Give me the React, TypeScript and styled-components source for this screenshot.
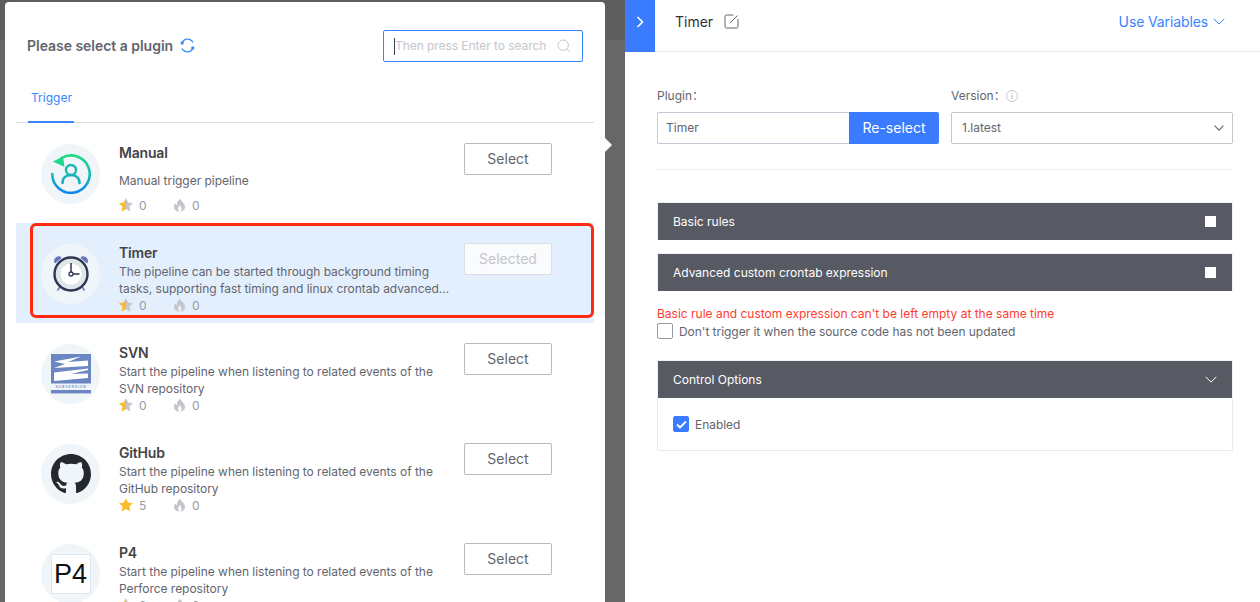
import React from "react";
import styled, { createGlobalStyle } from "styled-components";
import { BsGithub } from "react-icons/bs";

const GlobalStyle = createGlobalStyle`
  html, body { margin: 0; padding: 0; background: #666; }
  body { font-family: Inter, "Noto Sans CJK SC", "Noto Sans", sans-serif; font-size: 12px; color: #63656e; }
  * { box-sizing: border-box; }
`;

const Page = styled.div`
  display: flex;
  width: 1260px;
  height: 602px;
  overflow: hidden;
  background: #666;
`;

const LeftPane = styled.div`
  width: 625px;
  flex: none;
  padding: 2px 0 0 5px;
  position: relative;
  background: linear-gradient(#5e5e5e 0, #5e5e5e 40px, #676767 40px);
  &::before {
    content: "";
    position: absolute;
    left: -14px;
    top: 123px;
    width: 18px;
    height: 18px;
    border: 1px solid #56657c;
    border-radius: 50%;
  }
`;

const Modal = styled.div`
  position: relative;
  width: 600px;
  height: 640px;
  background: #fff;
  border-radius: 4px;
  padding: 0 11px;
  &::after {
    content: "";
    position: absolute;
    right: -7px;
    top: 136px;
    border-left: 7px solid #fff;
    border-top: 7px solid transparent;
    border-bottom: 7px solid transparent;
  }
`;

const ModalHeader = styled.div`
  height: 73px;
  display: flex;
  align-items: center;
  justify-content: space-between;
  padding: 14px 11px 0 11px;
`;

const TitleGroup = styled.div`
  display: flex;
  align-items: center;
  gap: 7px;
`;

const ModalTitle = styled.span`
  font-size: 14px;
  font-weight: 600;
  color: #63656e;
  letter-spacing: -0.03px;
`;

const SearchBox = styled.div`
  position: relative;
  width: 200px;
  height: 32px;
  border: 1px solid #3a84ff;
  border-radius: 2px;
  display: flex;
  align-items: center;
  padding: 0 11px;
  &::before {
    content: "";
    position: absolute;
    left: 10px;
    top: 7px;
    width: 1px;
    height: 17px;
    background: #3c4058;
  }
`;

const SearchInput = styled.input`
  flex: 1;
  min-width: 0;
  border: 0;
  outline: 0;
  padding: 0;
  background: transparent;
  font: inherit;
  font-size: 12px;
  letter-spacing: -0.06px;
  &::placeholder { color: #c4c6cc; opacity: 1; }
`;

const Tabs = styled.div`
  height: 48px;
  border-bottom: 1px solid #dcdee5;
  padding-left: 12px;
`;

const Tab = styled.div`
  width: 46px;
  height: 48px;
  border-bottom: 2px solid #3a84ff;
  color: #3a84ff;
  padding: 0 3px;
  line-height: 46px;
  font-size: 12px;
`;

const Row = styled.div<{ $active?: boolean }>`
  height: 100px;
  display: flex;
  align-items: flex-start;
  padding: 20px 0 0 25px;
  background: ${(p) => (p.$active ? "#e3effd" : "#fff")};
`;

const Avatar = styled.div`
  width: 59px;
  height: 60px;
  border-radius: 50%;
  background: #f0f5f9;
  flex: none;
  display: flex;
  align-items: center;
  justify-content: center;
  margin-top: 1px;
`;

const Info = styled.div`
  width: 335px;
  height: 70px;
  margin: 1px 10px 0 19px;
  display: flex;
  flex-direction: column;
  justify-content: space-between;
`;

const Name = styled.div`
  height: 19px;
  font-size: 14px;
  line-height: 18px;
  font-weight: 600;
  color: #444;
  letter-spacing: -0.2px;
`;

const Desc = styled.div`
  line-height: 17px;
  font-size: 12px;
  color: #63656e;
  letter-spacing: -0.03px;
  display: -webkit-box;
  -webkit-line-clamp: 2;
  -webkit-box-orient: vertical;
  overflow: hidden;
`;

const Stats = styled.div`
  height: 18px;
  margin-top: -1px;
  display: flex;
  align-items: center;
  color: #979ba5;
  font-size: 12px;
`;

const Stat = styled.span`
  width: 54px;
  display: flex;
  align-items: center;
  gap: 6px;
`;

const SelectButton = styled.button<{ $done?: boolean }>`
  width: 88px;
  height: 32px;
  flex: none;
  border: 1px solid ${(p) => (p.$done ? "#dcdee5" : "#b8bac2")};
  border-radius: 2px;
  background: ${(p) => (p.$done ? "#fafbfd" : "#fff")};
  color: ${(p) => (p.$done ? "#c4c6cc" : "#63656e")};
  font: inherit;
  font-size: 14px;
  padding: 0 0 2px;
`;

const Highlight = styled.div`
  position: absolute;
  left: 25px;
  top: 221px;
  width: 564px;
  height: 95px;
  border: 3px solid #ff2a0f;
  border-radius: 6px;
  pointer-events: none;
`;

const Panel = styled.div`
  flex: 1;
  background: #fff;
  min-width: 0;
`;

const PanelHeader = styled.div`
  height: 52px;
  display: flex;
  align-items: center;
  border-bottom: 1px solid #e6e7ea;
  padding: 0 35px 8px 0;
`;

const Toggle = styled.div`
  width: 30px;
  height: 52px;
  margin: 0 0 -9px;
  padding-bottom: 8px;
  background: #3a7bff;
  display: flex;
  align-items: center;
  justify-content: center;
  flex: none;
`;

const PanelTitle = styled.span`
  margin-left: 20px;
  font-size: 14px;
  color: #313238;
  margin-right: 11px;
`;

const VarLink = styled.span`
  margin-left: auto;
  display: flex;
  align-items: center;
  gap: 5px;
  font-size: 14px;
  letter-spacing: -0.12px;
  color: #3a84ff;
`;

const PanelBody = styled.div`
  padding: 36px 27px 0 32px;
`;

const FormRow = styled.div`
  display: flex;
  gap: 12px;
  padding-bottom: 25px;
  border-bottom: 1px solid #eceef2;
  margin-bottom: 32px;
`;

const Field = styled.div<{ $width: number }>`
  width: ${(p) => p.$width}px;
`;

const Label = styled.div`
  height: 16px;
  line-height: 16px;
  margin-bottom: 8px;
  font-size: 12px;
  display: flex;
  align-items: center;
`;

const Group = styled.div`
  display: flex;
  height: 32px;
`;

const ValueBox = styled.div`
  flex: 1;
  border: 1px solid #c3cdd7;
  border-radius: 2px 0 0 2px;
  border-right: 0;
  line-height: 30px;
  padding: 0 8px;
  font-size: 12px;
`;

const Reselect = styled.div`
  width: 90px;
  background: #3a7bff;
  color: #fff;
  font-size: 14px;
  text-align: center;
  line-height: 32px;
  border-radius: 0 2px 2px 0;
`;

const Dropdown = styled.div`
  height: 32px;
  border: 1px solid #c4c6cc;
  border-radius: 2px;
  display: flex;
  align-items: center;
  justify-content: space-between;
  padding: 0 8px 1px 10px;
  font-size: 12px;
`;

const Bar = styled.div<{ $gap?: number }>`
  height: 38px;
  background: #585a63;
  color: #fff;
  display: flex;
  align-items: center;
  justify-content: space-between;
  padding: 0 15px;
  font-size: 12px;
  margin-bottom: ${(p) => p.$gap ?? 0}px;
  border: 1px solid #eef0f3;
  border-bottom: 0;
`;

const WhiteBox = styled.span`
  width: 11px;
  height: 11px;
  margin-right: 1px;
  background: #fff;
`;

const ErrorText = styled.div`
  color: #ff3b30;
  font-size: 12px;
  line-height: 16px;
  margin-top: 15px;
`;

const CheckRow = styled.label`
  display: flex;
  align-items: center;
  gap: 6px;
  height: 16px;
  margin-top: 1px;
  font-size: 12px;
  letter-spacing: -0.04px;
`;

const Check = styled.span<{ $on?: boolean }>`
  width: 16px;
  height: 16px;
  flex: none;
  border-radius: 2px;
  border: 1px solid ${(p) => (p.$on ? "#3a7bff" : "#979ba5")};
  background: ${(p) => (p.$on ? "#3a7bff" : "#fff")};
  display: flex;
  align-items: center;
  justify-content: center;
`;

const OptionsBody = styled.div`
  height: 53px;
  border: 1px solid #e8eaee;
  border-top: 0;
  border-radius: 0 0 2px 2px;
  padding: 18px 15px 0;
  & > label { margin-top: 0; }
`;

const OptionsSpacer = styled.div`
  height: 21px;
`;

const ManualIcon = () => (
  <svg width="40" height="40" viewBox="0 0 40 40" fill="none">
    <defs>
      <linearGradient id="mg" x1="0" y1="0" x2="0" y2="1">
        <stop offset="0" stopColor="#1fdc84" />
        <stop offset="0.55" stopColor="#17b8b8" />
        <stop offset="1" stopColor="#0d86f0" />
      </linearGradient>
    </defs>
    <path d="M10.500 4A18.700 18.700 0 1 1 1.300 20" stroke="url(#mg)" strokeWidth="2.600" strokeLinecap="round" />
    <path d="M2 7.500 L12 2.500 L13.500 13 Z" fill="#1fd88a" />
    <circle cx="20" cy="16" r="5" stroke="#1ab8b0" strokeWidth="2.400" />
    <path d="M11.500 29c0-5.500 3.800-8 8.500-8s8.500 2.500 8.500 8" stroke="#1ab4b8" strokeWidth="2.600" strokeLinecap="round" />
  </svg>
);

const TimerIcon = () => (
  <svg width="42" height="42" viewBox="0 0 42 42" fill="none">
    <path d="M4 8.500a5 5 0 0 1 6.500-5L11.500 5 5 10.500Z" fill="#6279c0" />
    <path d="M38 8.500a5 5 0 0 0-6.500-5L30.500 5 37 10.500Z" fill="#6279c0" />
    <path d="M10.500 33l-3 4.500M31.500 33l3 4.500" stroke="#6279c0" strokeWidth="1.500" />
    <circle cx="21" cy="21" r="16.500" fill="#dfe6e8" stroke="#2f3552" strokeWidth="2.400" />
    <circle cx="21" cy="21" r="10.500" fill="#fff" />
    <path d="M21 19V10M23 21h6.500" stroke="#2f3552" strokeWidth="1.500" />
    <circle cx="21" cy="21" r="2" fill="#fff" stroke="#2f3552" strokeWidth="1.300" />
  </svg>
);

const SvnIcon = () => (
  <svg width="40" height="40" viewBox="0 0 40 40">
    <rect x="0" y="0" width="40" height="29.500" fill="#6c86c1" />
    <path d="M3 7.500 L30 2.500 L17 8 L37 6.500 L37 12 L3 14 L14 10 Z" fill="#fff" />
    <path d="M3 18.500 L37 14.500 L37 16 L20 20 L37 19.500 L37 24 L3 27 Z" fill="#fff" />
    <text x="20" y="33.600" fontFamily="Liberation Sans" fontSize="3.200" fontWeight="700" letterSpacing="1" textAnchor="middle" fill="#7d93c8">SUBVERSION</text>
    <rect x="0" y="36" width="40" height="3.400" fill="#6c86c1" />
  </svg>
);

const P4Icon = styled.div`
  width: 40px;
  height: 40px;
  background: #fff;
  border: 1px solid #e2e5ea;
  font-family: "Liberation Sans", sans-serif;
  font-size: 27px;
  line-height: 38px;
  text-align: center;
  color: #111;
`;

const Star = ({ level }: { level: "half" | "full" }) => (
  <svg width="14" height="14" viewBox="0 0 14 14">
    <path d="M7 .2l2.100 4.400 4.900.6-3.600 3.300 1 4.900L7 11l-4.400 2.400 1-4.900L0 5.200l4.900-.6Z" fill={level === "full" ? "#fdbb2c" : "#c4c6cc"} />
    {level === "half" && <path d="M7 .2L4.900 4.600 0 5.200l3.600 3.300-1 4.900L7 11Z" fill="#fdbb2c" />}
  </svg>
);

const Flame = () => (
  <svg width="13" height="14" viewBox="0 0 13 14">
    <path d="M7 .5c.6 2.600 4.900 4.400 5 8.200C12 11.800 9.800 13.500 7.200 13.500c1.300-1 1.800-2.300 1.200-3.800C8 8.600 7.200 8 7 6.900 5.900 8 5 9.300 5.100 10.800c.1 1.100.6 2 1.300 2.700C3.100 13.500 1 11.500 1 8.900c0-1.600.8-2.800 1.600-3.700.2 1 .6 1.600 1.200 2C4 4.700 5.200 2.300 7 .5Z" fill="#c4c6cc" />
  </svg>
);

const Chevron = ({ size, color, width = 1 }: { size: number; color: string; width?: number }) => (
  <svg width={size} height={size * 0.6} viewBox="0 0 12 7" fill="none">
    <path d="M.7.7 6 6l5.300-5.300" stroke={color} strokeWidth={width} />
  </svg>
);

const plugins = [
  { name: "Manual", desc: "Manual trigger pipeline", stars: 0, icon: <ManualIcon /> },
  {
    name: "Timer",
    desc: "The pipeline can be started through background timing tasks, supporting fast timing and linux crontab advanced timing configuration",
    stars: 0,
    icon: <TimerIcon />,
    active: true,
  },
  { name: "SVN", desc: "Start the pipeline when listening to related events of the SVN repository", stars: 0, icon: <SvnIcon /> },
  { name: "GitHub", desc: "Start the pipeline when listening to related events of the GitHub repository", stars: 5, icon: <BsGithub size={40} color="#24292e" /> },
  { name: "P4", desc: "Start the pipeline when listening to related events of the Perforce repository", stars: 0, icon: <P4Icon>P4</P4Icon> },
];

export default function App() {
  return (
    <Page>
      <GlobalStyle />
      <LeftPane>
        <Modal>
          <ModalHeader>
            <TitleGroup>
              <ModalTitle>Please select a plugin</ModalTitle>
              <svg width="15" height="15" viewBox="0 0 15 15" fill="none" stroke="#3a8cff" strokeWidth="1.300">
                <path d="M2 5a6 6 0 0 1 10-2l1 1.500" />
                <path d="M13 10a6 6 0 0 1-10 2l-1-1.500" />
                <circle cx="2.200" cy="5" r="1" fill="#3a8cff" />
                <circle cx="12.800" cy="10" r="1" fill="#3a8cff" />
              </svg>
            </TitleGroup>
            <SearchBox>
              <SearchInput placeholder="Then press Enter to search" readOnly />
              <svg width="14" height="14" viewBox="0 0 14 14" fill="none" stroke="#c4c6cc" strokeWidth="1">
                <circle cx="6.200" cy="6.200" r="5.200" />
                <path d="M10 10l3 3" />
              </svg>
            </SearchBox>
          </ModalHeader>
          <Tabs>
            <Tab>Trigger</Tab>
          </Tabs>
          {plugins.map((p) => (
            <Row key={p.name} $active={p.active}>
              <Avatar>{p.icon}</Avatar>
              <Info>
                <Name>{p.name}</Name>
                <Desc>{p.desc}</Desc>
                <Stats>
                  <Stat>
                    <Star level={p.stars > 0 ? "full" : "half"} />
                    {p.stars}
                  </Stat>
                  <Stat>
                    <Flame />
                    0
                  </Stat>
                </Stats>
              </Info>
              <SelectButton $done={p.active}>{p.active ? "Selected" : "Select"}</SelectButton>
            </Row>
          ))}
          <Highlight />
        </Modal>
      </LeftPane>
      <Panel>
        <PanelHeader>
          <Toggle>
            <svg width="8" height="12" viewBox="0 0 8 12" fill="none" stroke="#fff" strokeWidth="1.600">
              <path d="M1.500 1l5 5-5 5" />
            </svg>
          </Toggle>
          <PanelTitle>Timer</PanelTitle>
          <svg width="15" height="15" viewBox="0 0 15 15" fill="none" stroke="#63656e" strokeWidth="1">
            <path d="M9.500 1H2.500A1.500 1.500 0 0 0 1 2.500v10A1.500 1.500 0 0 0 2.500 14h10a1.500 1.500 0 0 0 1.500-1.500V5" />
            <path d="M6 9l7.500-7.500" />
          </svg>
          <VarLink>
            Use Variables
            <Chevron size={12} color="#3a84ff" />
          </VarLink>
        </PanelHeader>
        <PanelBody>
          <FormRow>
            <Field $width={282}>
              <Label>Plugin：</Label>
              <Group>
                <ValueBox>Timer</ValueBox>
                <Reselect>Re-select</Reselect>
              </Group>
            </Field>
            <Field $width={282}>
              <Label>
                Version：
                <svg width="12" height="12" viewBox="0 0 12 12" fill="none">
                  <circle cx="6" cy="6" r="5.500" stroke="#c4c6cc" />
                  <path d="M6 5v4M6 3v1" stroke="#b0b3ba" />
                </svg>
              </Label>
              <Dropdown>
                1.latest
                <Chevron size={10} color="#63656e" width={1.400} />
              </Dropdown>
            </Field>
          </FormRow>
          <Bar $gap={13}>
            Basic rules
            <WhiteBox />
          </Bar>
          <Bar>
            Advanced custom crontab expression
            <WhiteBox />
          </Bar>
          <ErrorText>Basic rule and custom expression can't be left empty at the same time</ErrorText>
          <CheckRow>
            <Check />
            Don't trigger it when the source code has not been updated
          </CheckRow>
          <OptionsSpacer />
          <Bar>
            Control Options
            <Chevron size={12} color="#fff" />
          </Bar>
          <OptionsBody>
            <CheckRow>
              <Check $on>
                <svg width="11" height="9" viewBox="0 0 11 9" fill="none" stroke="#fff" strokeWidth="1.800">
                  <path d="M1 4.500l3 3 6-6" />
                </svg>
              </Check>
              Enabled
            </CheckRow>
          </OptionsBody>
        </PanelBody>
      </Panel>
    </Page>
  );
}
